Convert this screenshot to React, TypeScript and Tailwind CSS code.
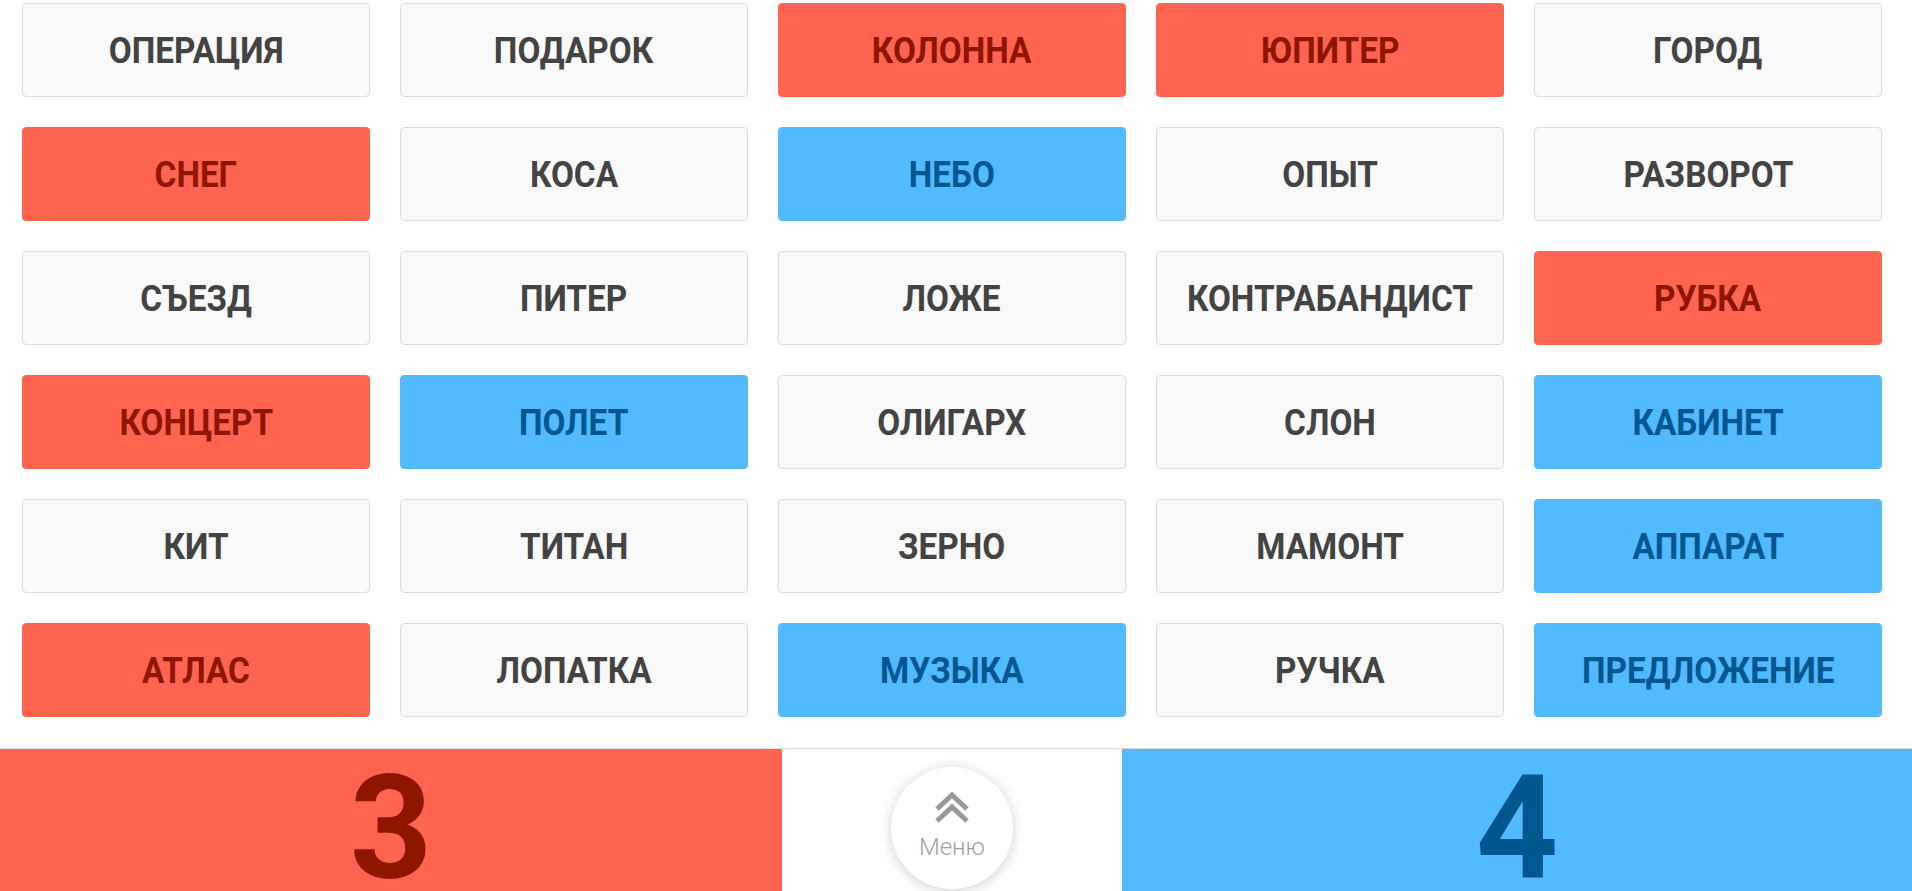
import React from 'react';

type Team = 'red' | 'blue' | 'none';

const words: { text: string; team: Team }[] = [
  { text: 'ОПЕРАЦИЯ', team: 'none' },
  { text: 'ПОДАРОК', team: 'none' },
  { text: 'КОЛОННА', team: 'red' },
  { text: 'ЮПИТЕР', team: 'red' },
  { text: 'ГОРОД', team: 'none' },
  { text: 'СНЕГ', team: 'red' },
  { text: 'КОСА', team: 'none' },
  { text: 'НЕБО', team: 'blue' },
  { text: 'ОПЫТ', team: 'none' },
  { text: 'РАЗВОРОТ', team: 'none' },
  { text: 'СЪЕЗД', team: 'none' },
  { text: 'ПИТЕР', team: 'none' },
  { text: 'ЛОЖЕ', team: 'none' },
  { text: 'КОНТРАБАНДИСТ', team: 'none' },
  { text: 'РУБКА', team: 'red' },
  { text: 'КОНЦЕРТ', team: 'red' },
  { text: 'ПОЛЕТ', team: 'blue' },
  { text: 'ОЛИГАРХ', team: 'none' },
  { text: 'СЛОН', team: 'none' },
  { text: 'КАБИНЕТ', team: 'blue' },
  { text: 'КИТ', team: 'none' },
  { text: 'ТИТАН', team: 'none' },
  { text: 'ЗЕРНО', team: 'none' },
  { text: 'МАМОНТ', team: 'none' },
  { text: 'АППАРАТ', team: 'blue' },
  { text: 'АТЛАС', team: 'red' },
  { text: 'ЛОПАТКА', team: 'none' },
  { text: 'МУЗЫКА', team: 'blue' },
  { text: 'РУЧКА', team: 'none' },
  { text: 'ПРЕДЛОЖЕНИЕ', team: 'blue' },
];

const cardStyles: Record<Team, string> = {
  none: 'bg-[#f9f9f9] border-[#dcdcdc] text-[#434343]',
  red: 'bg-[#ff6450] border-[#ff6450] text-[#8e1500]',
  blue: 'bg-[#52baff] border-[#52baff] text-[#00578f]',
};

const WordCard = ({ text, team }: { text: string; team: Team }) => (
  <div
    className={`h-[94px] rounded-[4px] border flex items-center justify-center overflow-hidden ${cardStyles[team]}`}
  >
    <span className="inline-block scale-x-[0.9] text-[37px] font-bold leading-none whitespace-nowrap">
      {text}
    </span>
  </div>
);

const App = () => {
  return (
    <div className="w-[1912px] h-[891px] overflow-hidden bg-white font-['Roboto',sans-serif]">
      {/* Word grid */}
      <div className="pl-[22px] pr-[30px] pt-[3px] grid grid-cols-5 gap-x-[30px] gap-y-[30px]">
        {words.map((w) => (
          <WordCard key={w.text} text={w.text} team={w.team} />
        ))}
      </div>

      {/* Score bar */}
      <div className="mt-[31px] flex h-[143px] border-t border-[#dddddd]">
        <div className="w-[782px] bg-[#ff6450] flex justify-center pt-[8px]">
          <span className="text-[144px] font-bold leading-none text-[#8e1500]">3</span>
        </div>
        <div className="w-[340px] flex justify-center pt-[18px]">
          <button className="w-[122px] h-[122px] rounded-full bg-white shadow-[0_2px_14px_rgba(0,0,0,0.18)] flex flex-col items-center pt-[25px]">
            <svg width="34" height="31" viewBox="0 0 34 31" fill="none" stroke="#9a9a9a" strokeWidth="5">
              <polyline points="2,17 17,3 32,17" />
              <polyline points="2,29 17,15 32,29" />
            </svg>
            <span className="mt-[12px] text-[24px] font-light leading-none text-[#a0a0a0]">Меню</span>
          </button>
        </div>
        <div className="flex-1 bg-[#52baff] flex justify-center pt-[8px]">
          <span className="text-[144px] font-bold leading-none text-[#00578f]">4</span>
        </div>
      </div>
    </div>
  );
};

export default App;
